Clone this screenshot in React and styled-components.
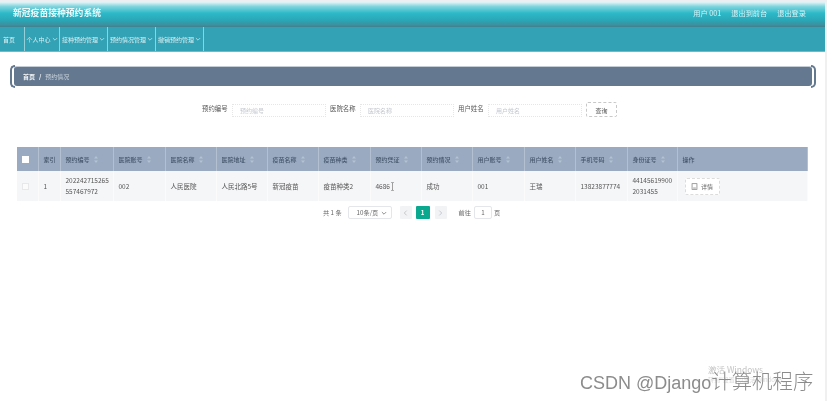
import React from 'react'
import styled, { createGlobalStyle } from 'styled-components'

const GlobalStyle = createGlobalStyle`
  html, body { margin: 0; padding: 0; background: #fff; }
  body { font-family: "Noto Sans CJK SC", "Liberation Sans", sans-serif; overflow: hidden; }
`

const Page = styled.div`
  position: relative;
  width: 827px;
  height: 401px;
  overflow: hidden;
  background: #fff;
  border-top: 2px solid #eceef1;
  box-sizing: border-box;
  filter: blur(0.45px);
`
const Header = styled.div`
  height: 25px;
  display: flex;
  align-items: center;
  justify-content: space-between;
  padding: 0 21px 4px 13px;
  box-sizing: border-box;
  color: #fff;
  background: linear-gradient(180deg, #e4f5f7 0%, #7fd4dd 18%, #2cb9c8 45%, #2aa5b5 75%, #3d8f9e 92%, #41808e 100%);
`
const Title = styled.div`
  font-size: 8.8px;
  font-weight: 700;
  color: #eefafb;
`
const UserLinks = styled.div`
  display: flex;
  gap: 10px;
  font-size: 7.2px;
  color: #d9f3f6;
`
const Nav = styled.div`
  height: 25px;
  display: flex;
  background: #33a2b5;
  border-bottom: 1px solid #6dbccb;
  box-sizing: border-box;
`
const NavItem = styled.div`
  width: ${(props) => props.$w}px;
  display: flex;
  align-items: center;
  justify-content: center;
  gap: 1px;
  font-size: 6px;
  color: #d7eff3;
  border-right: 1px solid #93d0da;
  box-sizing: border-box;
  white-space: nowrap;
  &:first-child { padding-right: 6px; }
`
const Crumb = styled.div`
  position: relative;
  margin: 14px 15px 0 14px;
  height: 20px;
  display: flex;
  align-items: center;
  gap: 4px;
  padding-left: 9px;
  background: #64788f;
  border-radius: 3px;
  border-top: 1px solid #c4ccd6;
  box-sizing: border-box;
  font-size: 6px;
  color: #c9d2dc;
  &::before, &::after {
    content: '';
    position: absolute;
    top: -2px;
    bottom: -2px;
    width: 5px;
    border: 2px solid #64788f;
    box-sizing: border-box;
  }
  &::before {
    left: -4px;
    border-right: none;
    border-radius: 5px 0 0 5px;
  }
  &::after {
    right: -4px;
    border-left: none;
    border-radius: 0 5px 5px 0;
  }
`
const CrumbStrong = styled.span`
  color: #f2f5f8;
  font-weight: 700;
`
const Search = styled.div`
  display: flex;
  align-items: center;
  margin: 16px 0 0 202px;
  height: 15px;
`
const SearchLabel = styled.span`
  width: 30px;
  margin-top: -3px;
  font-size: 6.4px;
  color: #555;
  white-space: nowrap;
`
const SearchInput = styled.div`
  width: 94px;
  height: 13px;
  margin: 2px 4px 0 0;
  padding-left: 7px;
  display: flex;
  align-items: center;
  border: 1px dotted #e6e6e6;
  box-sizing: border-box;
  font-size: 6px;
  color: #c4c8cf;
`
const SearchButton = styled.div`
  width: 31px;
  height: 15px;
  padding-top: 2px;
  display: flex;
  align-items: center;
  justify-content: center;
  border: 1px dashed #c8c8c8;
  border-radius: 2px;
  box-sizing: border-box;
  font-size: 6px;
  color: #555;
`
const Table = styled.table`
  margin: 30px 0 0 17px;
  width: 791px;
  border-collapse: collapse;
  table-layout: fixed;
  font-size: 6.5px;
`
const Th = styled.th`
  height: 24px;
  padding: 0 0 0 5px;
  text-align: left;
  font-size: 6px;
  font-weight: 500;
  color: #44556a;
  background: #9aabc1;
  border-right: 1px solid #b3c0d1;
  box-sizing: border-box;
  white-space: nowrap;
`
const Td = styled.td`
  height: 30px;
  padding: 0 3px 0 5px;
  color: #555;
  background: #f5f6f8;
  border-right: 1px solid #fbfbfc;
  box-sizing: border-box;
  line-height: 11px;
  word-break: break-all;
`
const SortIcon = styled.svg`
  margin-left: 4px;
  vertical-align: -1px;
`
const CheckBox = styled.span`
  display: block;
  width: 7px;
  height: 7px;
  background: ${(props) => (props.$head ? '#fff' : '#fbfbfc')};
  border: 1px solid ${(props) => (props.$head ? '#fff' : '#e8e8ea')};
  box-sizing: border-box;
`
const CursorIcon = styled.svg`
  margin-left: 1px;
  vertical-align: -2px;
`
const DetailButton = styled.div`
  width: 35px;
  height: 17px;
  margin-left: 2px;
  display: flex;
  align-items: center;
  justify-content: center;
  gap: 3px;
  background: #fff;
  border: 1px dashed #dcdcdc;
  border-radius: 2px;
  box-sizing: border-box;
  font-size: 6px;
  color: #666;
`
const Pager = styled.div`
  display: flex;
  align-items: center;
  margin: 4px 0 0 323px;
  height: 15px;
  font-size: 6.2px;
  color: #666;
`
const PageSize = styled.div`
  width: 44px;
  height: 13px;
  margin-left: 6px;
  padding: 0 4px 0 8px;
  display: flex;
  align-items: center;
  justify-content: space-between;
  border: 1px solid #e4e6ea;
  border-radius: 2px;
  box-sizing: border-box;
`
const PageBtn = styled.div`
  width: ${(props) => (props.$active ? 14 : 12)}px;
  height: 13px;
  margin-left: ${(props) => props.$gap}px;
  display: flex;
  align-items: center;
  justify-content: center;
  border-radius: 1px;
  font-weight: ${(props) => (props.$active ? 700 : 400)};
  color: ${(props) => (props.$active ? '#fff' : '#b5b8be')};
  background: ${(props) => (props.$active ? '#0aa88f' : '#f2f3f5')};
`
const GoLabel = styled.span`
  margin-left: 12px;
`
const GoInput = styled.div`
  width: 18px;
  height: 13px;
  margin: 0 2px 0 3px;
  display: flex;
  align-items: center;
  justify-content: center;
  border: 1px solid #e4e6ea;
  border-radius: 2px;
  box-sizing: border-box;
`
const Watermark = styled.div`
  position: absolute;
  left: 708px;
  top: 362px;
  font-size: 8.5px;
  line-height: 11px;
  color: #c4c4c4;
`
const WatermarkSub = styled.div`
  font-size: 6px;
  line-height: 9px;
  color: #d8d8d8;
`
const Csdn = styled.div`
  position: absolute;
  left: 580px;
  top: 367px;
  font-size: 18px;
  line-height: 26px;
  color: #8c8c8c;
  font-family: "Liberation Sans", "Noto Sans CJK SC", sans-serif;
  white-space: nowrap;
`
const CsdnCjk = styled.span`
  font-size: 20.4px;
  font-weight: 300;
`
const ScrollEdge = styled.div`
  position: absolute;
  right: 0;
  top: 0;
  bottom: 0;
  width: 2px;
  background: #f0f0f0;
`

const Chevron = () => (
  <svg width="6" height="6" viewBox="0 0 10 10" fill="none" stroke="currentColor" strokeWidth="1.2">
    <path d="M1.5 3.5 5 7l3.5-3.5" />
  </svg>
)
const Arrow = ({ right }) => (
  <svg width="5" height="6" viewBox="0 0 8 10" fill="none" stroke="currentColor" strokeWidth="1.2">
    <path d={right ? 'M2 1l4 4-4 4' : 'M6 1 2 5l4 4'} />
  </svg>
)
const Sort = () => (
  <SortIcon width="4" height="7" viewBox="0 0 4 7" fill="#b4c1d2">
    <path d="M2 0l2 2.6H0zM2 7 0 4.4h4z" />
  </SortIcon>
)
const Cursor = () => (
  <CursorIcon width="3" height="9" viewBox="0 0 3 9" fill="none" stroke="#666" strokeWidth="0.6">
    <path d="M0 .3h1l.5.4.5-.4h1M1.5.7v7.6M0 8.7h1l.5-.4.5.4h1" />
  </CursorIcon>
)
const DocIcon = () => (
  <svg width="7" height="7" viewBox="0 0 10 10" fill="none" stroke="#777" strokeWidth="1">
    <rect x="1.5" y="1" width="7" height="8" />
    <path d="M3 7.2h4" />
  </svg>
)

const navItems = [
  { label: '首页', w: 25 },
  { label: '个人中心', w: 35, arrow: true },
  { label: '接种预约管理', w: 48, arrow: true },
  { label: '预约情况管理', w: 48, arrow: true },
  { label: '撤销预约管理', w: 48, arrow: true },
]

const columns = [
  { label: '预约编号', w: 53, value: '202242715265557467972' },
  { label: '医院账号', w: 52, value: '002' },
  { label: '医院名称', w: 51, value: '人民医院' },
  { label: '医院地址', w: 51, value: '人民北路5号' },
  { label: '疫苗名称', w: 51, value: '新冠疫苗' },
  { label: '疫苗种类', w: 52, value: '疫苗种类2' },
  { label: '预约凭证', w: 51, value: '4686', cursor: true },
  { label: '预约情况', w: 51, value: '成功' },
  { label: '用户账号', w: 52, value: '001' },
  { label: '用户姓名', w: 51, value: '王瑞' },
  { label: '手机号码', w: 52, value: '13823877774' },
  { label: '身份证号', w: 50, value: '441456199002031455' },
]

export default function App() {
  return (
    <Page>
      <GlobalStyle />
      <Header>
        <Title>新冠疫苗接种预约系统</Title>
        <UserLinks>
          <span>用户 001</span>
          <span>退出到前台</span>
          <span>退出登录</span>
        </UserLinks>
      </Header>
      <Nav>
        {navItems.map((item) => (
          <NavItem key={item.label} $w={item.w}>
            {item.label}
            {item.arrow && <Chevron />}
          </NavItem>
        ))}
      </Nav>
      <Crumb>
        <CrumbStrong>首页</CrumbStrong>
        <CrumbStrong>/</CrumbStrong>
        <span>预约情况</span>
      </Crumb>
      <Search>
        <SearchLabel>预约编号</SearchLabel>
        <SearchInput>预约编号</SearchInput>
        <SearchLabel>医院名称</SearchLabel>
        <SearchInput>医院名称</SearchInput>
        <SearchLabel>用户姓名</SearchLabel>
        <SearchInput>用户姓名</SearchInput>
        <SearchButton>查询</SearchButton>
      </Search>
      <Table>
        <colgroup>
          <col style={{ width: 21 }} />
          <col style={{ width: 22 }} />
          {columns.map((c) => (
            <col key={c.label} style={{ width: c.w }} />
          ))}
          <col />
        </colgroup>
        <thead>
          <tr>
            <Th><CheckBox $head /></Th>
            <Th>索引</Th>
            {columns.map((c) => (
              <Th key={c.label}>
                {c.label}
                <Sort />
              </Th>
            ))}
            <Th>操作</Th>
          </tr>
        </thead>
        <tbody>
          <tr>
            <Td><CheckBox /></Td>
            <Td>1</Td>
            {columns.map((c) => (
              <Td key={c.label}>
                {c.value}
                {c.cursor && <Cursor />}
              </Td>
            ))}
            <Td>
              <DetailButton>
                <DocIcon />
                详情
              </DetailButton>
            </Td>
          </tr>
        </tbody>
      </Table>
      <Pager>
        <span>共 1 条</span>
        <PageSize>
          10条/页
          <Chevron />
        </PageSize>
        <PageBtn $gap={8}><Arrow /></PageBtn>
        <PageBtn $gap={4} $active>1</PageBtn>
        <PageBtn $gap={5}><Arrow right /></PageBtn>
        <GoLabel>前往</GoLabel>
        <GoInput>1</GoInput>
        <span>页</span>
      </Pager>
      <Watermark>
        激活 Windows
        <WatermarkSub>转到"设置"以激活 Windows。</WatermarkSub>
      </Watermark>
      <Csdn>
        CSDN @Django<CsdnCjk>计算机程序</CsdnCjk>
      </Csdn>
      <ScrollEdge />
    </Page>
  )
}
